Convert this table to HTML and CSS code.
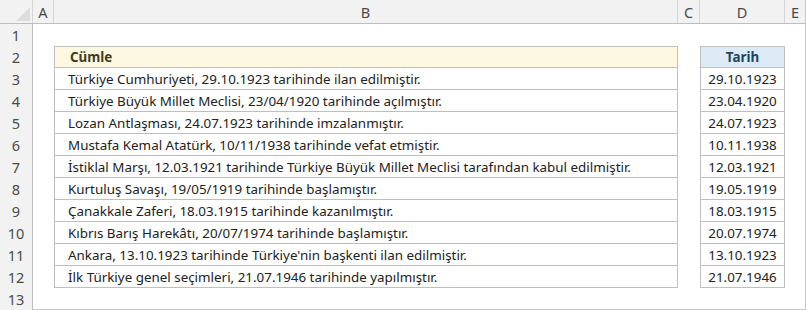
FILE: index.html
```html
<!DOCTYPE html>
<html lang="tr">
<head>
<meta charset="utf-8">
<link rel="stylesheet" href="styles.css">
</head>
<body>
<div class="sheet">
  <div class="row head">
    <div class="corner"><svg width="14" height="14" viewBox="0 0 14 14"><polygon points="14,0 14,14 0,14" fill="#dcdcdc"/></svg></div>
    <div class="ch">A</div>
    <div class="ch">B</div>
    <div class="ch">C</div>
    <div class="ch">D</div>
    <div class="ch last">E</div>
  </div>
  <div class="row"><div class="rh">1</div><div></div><div></div><div></div><div></div><div></div></div>
  <div class="row"><div class="rh">2</div><div></div><div class="tb top hy">Cümle</div><div></div><div class="td top hb">Tarih</div><div></div></div>
  <div class="row"><div class="rh">3</div><div></div><div class="tb">Türkiye Cumhuriyeti, 29.10.1923 tarihinde ilan edilmiştir.</div><div></div><div class="td">29.10.1923</div><div></div></div>
  <div class="row"><div class="rh">4</div><div></div><div class="tb">Türkiye Büyük Millet Meclisi, 23/04/1920 tarihinde açılmıştır.</div><div></div><div class="td">23.04.1920</div><div></div></div>
  <div class="row"><div class="rh">5</div><div></div><div class="tb">Lozan Antlaşması, 24.07.1923 tarihinde imzalanmıştır.</div><div></div><div class="td">24.07.1923</div><div></div></div>
  <div class="row"><div class="rh">6</div><div></div><div class="tb">Mustafa Kemal Atatürk, 10/11/1938 tarihinde vefat etmiştir.</div><div></div><div class="td">10.11.1938</div><div></div></div>
  <div class="row"><div class="rh">7</div><div></div><div class="tb">İstiklal Marşı, 12.03.1921 tarihinde Türkiye Büyük Millet Meclisi tarafından kabul edilmiştir.</div><div></div><div class="td">12.03.1921</div><div></div></div>
  <div class="row"><div class="rh">8</div><div></div><div class="tb">Kurtuluş Savaşı, 19/05/1919 tarihinde başlamıştır.</div><div></div><div class="td">19.05.1919</div><div></div></div>
  <div class="row"><div class="rh">9</div><div></div><div class="tb">Çanakkale Zaferi, 18.03.1915 tarihinde kazanılmıştır.</div><div></div><div class="td">18.03.1915</div><div></div></div>
  <div class="row"><div class="rh">10</div><div></div><div class="tb">Kıbrıs Barış Harekâtı, 20/07/1974 tarihinde başlamıştır.</div><div></div><div class="td">20.07.1974</div><div></div></div>
  <div class="row"><div class="rh">11</div><div></div><div class="tb">Ankara, 13.10.1923 tarihinde Türkiye'nin başkenti ilan edilmiştir.</div><div></div><div class="td">13.10.1923</div><div></div></div>
  <div class="row"><div class="rh">12</div><div></div><div class="tb">İlk Türkiye genel seçimleri, 21.07.1946 tarihinde yapılmıştır.</div><div></div><div class="td">21.07.1946</div><div></div></div>
  <div class="row"><div class="rh">13</div><div></div><div></div><div></div><div></div><div></div></div>
</div>
</body>
</html>
```
FILE: styles.css
```css
* { box-sizing: border-box; }
html, body { margin: 0; padding: 0; background: #fff; }
body {
  font-family: "Noto Sans", "Segoe UI", sans-serif;
  font-size: 13.4px;
  color: #222;
  width: 806px;
  height: 310px;
  overflow: hidden;
}
.sheet {
  width: 806px;
  height: 310px;
  border-right: 1px solid #c6c6c6;
  border-bottom: 1px solid #c6c6c6;
  background: #fff;
}
.row {
  display: grid;
  grid-template-columns: 33px 21px 624px 22px 85px 20px;
  height: 22px;
}
.row.head {
  height: 24px;
  background: #f2f2f2;
  border-bottom: 1px solid #bdbdbd;
}
.corner {
  display: flex;
  align-items: flex-end;
  justify-content: flex-end;
  padding: 0 2px 2px 0;
  border-right: 1px solid #d6d6d6;
}
.ch {
  display: flex;
  align-items: center;
  justify-content: center;
  color: #4a4a4a;
  font-size: 14.5px;
  border-right: 1px solid #d6d6d6;
}
.ch.last { border-right: none; }
.rh {
  display: flex;
  align-items: center;
  justify-content: center;
  background: #f2f2f2;
  border-right: 1px solid #bdbdbd;
  color: #4a4a4a;
  font-size: 14.5px;
}
.tb, .td {
  display: flex;
  align-items: center;
  border-left: 1px solid #bfbfbf;
  border-right: 1px solid #bfbfbf;
  border-bottom: 1px solid #bfbfbf;
  white-space: nowrap;
}
.tb { padding-left: 13px; }
.td { justify-content: center; }
.top { border-top: 1px solid #bfbfbf; }
.hy {
  background: #fcf8e2;
  color: #3f3c22;
  font-weight: 700;
  padding-left: 15px;
}
.hb {
  background: #ddebf6;
  color: #22445c;
  font-weight: 700;
}
```
